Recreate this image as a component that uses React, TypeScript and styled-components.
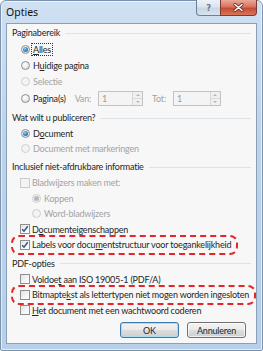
import React from 'react'
import styled, { createGlobalStyle, css } from 'styled-components'

const GlobalStyle = createGlobalStyle`
	html, body {
		margin: 0;
		padding: 0;
		background: #ffffff;
	}
	body {
		font-family: Lato, 'Noto Sans', sans-serif;
		font-size: 9px;
		letter-spacing: -0.2px;
		color: #262626;
	}
`

const Window = styled.div`
	box-sizing: border-box;
	width: 263px;
	height: 351px;
	display: flex;
	flex-direction: column;
	padding: 0 5px 6px 5px;
	border: 1px solid #7c93ad;
	border-radius: 6px 6px 2px 2px;
	background: linear-gradient(180deg, #cfe0f2 0%, #bcd3ea 40%, #b7cfe8 100%);
	box-shadow: inset 0 0 0 1px rgba(255, 255, 255, 0.6);
`

const TitleBar = styled.div`
	height: 22px;
	display: flex;
	align-items: flex-start;
	justify-content: space-between;
`

const Title = styled.span`
	font-family: 'Noto Sans', sans-serif;
	font-size: 10.5px;
	letter-spacing: 0;
	color: #111;
	margin-top: 4px;
`

const Captions = styled.div`
	display: flex;
	margin-top: -1px;
`

const CaptionButton = styled.div<{ $close?: boolean }>`
	height: 16px;
	display: flex;
	align-items: center;
	justify-content: center;
	box-sizing: border-box;
	border: 1px solid #6d7f96;
	border-top: none;
	${p =>
		p.$close
			? css`
					width: 37px;
					border-radius: 0 0 4px 0;
					border-color: #7a3b32;
					background: linear-gradient(180deg, #e9a898 0%, #d7745f 45%, #c74a30 55%, #d9755c 100%);
			  `
			: css`
					width: 24px;
					border-right: none;
					border-radius: 0 0 0 4px;
					background: linear-gradient(180deg, #edf2f8 0%, #dbe5f0 45%, #c8d5e4 55%, #d8e3ef 100%);
					color: #6b7787;
					font-family: 'DejaVu Sans', sans-serif;
					font-size: 8.5px;
					font-weight: bold;
			  `}
`

const Client = styled.div`
	flex: 1;
	display: flex;
	flex-direction: column;
	border: 1px solid #8ba0b8;
	background: #f7f7f7;
	padding: 0 5px 0 5px;
`

const Header = styled.div<{ $first?: boolean }>`
	height: 17px;
	display: flex;
	align-items: center;
	gap: 5px;
	margin-top: ${p => (p.$first ? '0' : '2px')};

	&::after {
		content: '';
		flex: 1;
		height: 1px;
		background: #dbe2e8;
		margin-top: 1px;
	}
`

const Row = styled.div<{ $h?: number; $indent?: number; $disabled?: boolean; $mark?: boolean }>`
	position: relative;
	height: ${p => p.$h ?? 15.5}px;
	width: fit-content;
	display: flex;
	align-items: center;
	padding-left: ${p => p.$indent ?? 9}px;
	color: ${p => (p.$disabled ? '#a3a3a3' : '#262626')};
	white-space: nowrap;

	${p =>
		p.$mark &&
		css`
			&::after {
				content: '';
				position: absolute;
				left: -1px;
				right: -7px;
				top: -2px;
				bottom: -2px;
				border: 2px dashed #e4262a;
				border-radius: 8px;
				pointer-events: none;
			}
		`}
`

const Radio = styled.span<{ $checked?: boolean; $disabled?: boolean }>`
	box-sizing: border-box;
	width: 9px;
	height: 9px;
	border-radius: 50%;
	margin-right: 3px;
	flex-shrink: 0;
	display: flex;
	align-items: center;
	justify-content: center;
	border: 1px solid ${p => (p.$disabled ? '#cfcfcf' : '#8e8f8f')};
	background: ${p =>
		p.$disabled
			? '#f3f3f3'
			: 'radial-gradient(circle at 40% 35%, #ffffff 0%, #e8e8e8 60%, #d0d0d0 100%)'};

	&::after {
		content: '';
		display: ${p => (p.$checked ? 'block' : 'none')};
		width: 5px;
		height: 5px;
		border-radius: 50%;
		background: ${p =>
			p.$disabled
				? '#b8b8b8'
				: 'radial-gradient(circle at 40% 35%, #8fd3f5 0%, #2a83c4 55%, #1b4f86 100%)'};
	}
`

const Check = styled.span<{ $disabled?: boolean }>`
	box-sizing: border-box;
	width: 10px;
	height: 10px;
	margin-right: 2px;
	flex-shrink: 0;
	display: flex;
	align-items: center;
	justify-content: center;
	border: 1px solid ${p => (p.$disabled ? '#cccccc' : '#8f8f8f')};
	background: ${p =>
		p.$disabled ? '#f4f4f4' : 'linear-gradient(135deg, #e2e2e2 0%, #f6f6f6 60%, #ffffff 100%)'};
`

const Focus = styled.span`
	outline: 1px dotted #333;
	padding: 0 1px;
	margin-left: -1px;
`

const U = styled.span`
	text-decoration: underline;
	text-underline-offset: 1px;
`

const SpinLabel = styled.span`
	color: #a3a3a3;
	margin-left: 9px;
	margin-right: 7px;
`

const Spin = styled.div<{ $w: number }>`
	box-sizing: border-box;
	width: ${p => p.$w}px;
	height: 15px;
	display: flex;
	border: 1px solid #c3c3c3;
	background: #f4f4f4;
`

const SpinValue = styled.span`
	flex: 1;
	padding-left: 3px;
	color: #9b9b9b;
	line-height: 13px;
`

const SpinButtons = styled.div`
	width: 9px;
	display: flex;
	flex-direction: column;
	border-left: 1px solid #d6d6d6;
`

const SpinArrow = styled.div<{ $down?: boolean }>`
	flex: 1;
	display: flex;
	align-items: center;
	justify-content: center;
	background: #f0f0f0;
	${p => p.$down && 'border-top: 1px solid #dadada;'}

	&::after {
		content: '';
		border-left: 2px solid transparent;
		border-right: 2px solid transparent;
		${p =>
			p.$down ? 'border-top: 2px solid #b5b5b5;' : 'border-bottom: 2px solid #b5b5b5;'}
	}
`

const Buttons = styled.div`
	display: flex;
	justify-content: flex-end;
	gap: 8px;
	margin-top: 4px;
	padding-right: 5px;
`

const Button = styled.div<{ $default?: boolean }>`
	box-sizing: border-box;
	width: 59px;
	height: 16px;
	display: flex;
	align-items: center;
	justify-content: center;
	border-radius: 3px;
	border: 1px solid ${p => (p.$default ? '#3d7bad' : '#707070')};
	background: linear-gradient(180deg, #f2f2f2 0%, #ebebeb 48%, #dddddd 52%, #cfcfcf 100%);
	box-shadow: inset 0 0 0 1px ${p => (p.$default ? '#a6dcf5' : 'rgba(255,255,255,0.7)')};
`

const CheckMark = () => (
	<svg width="8" height="8" viewBox="0 0 8 8">
		<path d="M1.2 4.2 L3 6.2 L6.8 1.3" fill="none" stroke="#2c4f86" strokeWidth="1.4" />
	</svg>
)

const CloseGlyph = () => (
	<svg width="11" height="9" viewBox="0 0 11 9">
		<path d="M2 1.5 L9 7.5 M9 1.5 L2 7.5" stroke="#6b2a20" strokeWidth="3" strokeLinecap="round" />
		<path d="M2 1.5 L9 7.5 M9 1.5 L2 7.5" stroke="#ffffff" strokeWidth="1.6" strokeLinecap="round" />
	</svg>
)

const App = () => {
	return (
		<>
			<GlobalStyle />
			<Window>
				<TitleBar>
					<Title>Opties</Title>
					<Captions>
						<CaptionButton>?</CaptionButton>
						<CaptionButton $close>
							<CloseGlyph />
						</CaptionButton>
					</Captions>
				</TitleBar>
				<Client>
					<Header $first>Paginabereik</Header>
					<Row $h={16}>
						<Radio $checked />
						<Focus>
							<U>A</U>lles
						</Focus>
					</Row>
					<Row $h={16}>
						<Radio />
						<span>
							H<U>u</U>idige pagina
						</span>
					</Row>
					<Row $h={16} $disabled>
						<Radio $disabled />
						<span>Selectie</span>
					</Row>
					<Row $h={18}>
						<Radio />
						<span>
							Pa<U>g</U>ina(s)
						</span>
						<SpinLabel>Van:</SpinLabel>
						<Spin $w={45}>
							<SpinValue>1</SpinValue>
							<SpinButtons>
								<SpinArrow />
								<SpinArrow $down />
							</SpinButtons>
						</Spin>
						<SpinLabel>Tot:</SpinLabel>
						<Spin $w={48}>
							<SpinValue>1</SpinValue>
							<SpinButtons>
								<SpinArrow />
								<SpinArrow $down />
							</SpinButtons>
						</Spin>
					</Row>

					<Header>Wat wilt u publiceren?</Header>
					<Row $h={15}>
						<Radio $checked />
						<span>
							D<U>o</U>cument
						</span>
					</Row>
					<Row $h={15} $disabled>
						<Radio $disabled />
						<span>Document met markeringen</span>
					</Row>

					<Header>Inclusief niet-afdrukbare informatie</Header>
					<Row $disabled $indent={8}>
						<Check $disabled />
						<span>Bladwijzers maken met:</span>
					</Row>
					<Row $disabled $indent={20}>
						<Radio $disabled $checked />
						<span>Koppen</span>
					</Row>
					<Row $disabled $indent={20}>
						<Radio $disabled />
						<span>Word-bladwijzers</span>
					</Row>
					<Row $indent={8}>
						<Check>
							<CheckMark />
						</Check>
						<span>
							D<U>o</U>cumenteigenschappen
						</span>
					</Row>
					<Row $indent={8} $mark>
						<Check>
							<CheckMark />
						</Check>
						<span>
							Labels voor docu<U>m</U>entstructuur voor toegankelijkheid
						</span>
					</Row>

					<Header>PDF-opties</Header>
					<Row $indent={8}>
						<Check />
						<span>
							Voldoe<U>t</U> aan ISO 19005-1 (PDF/A)
						</span>
					</Row>
					<Row $indent={8} $mark>
						<Check />
						<span>
							Bitmapte<U>k</U>st als lettertypen niet mogen worden ingesloten
						</span>
					</Row>
					<Row $indent={8}>
						<Check />
						<span>
							<U>H</U>et document met een wachtwoord coderen
						</span>
					</Row>

					<Buttons>
						<Button $default>OK</Button>
						<Button>Annuleren</Button>
					</Buttons>
				</Client>
			</Window>
		</>
	)
}

export default App
